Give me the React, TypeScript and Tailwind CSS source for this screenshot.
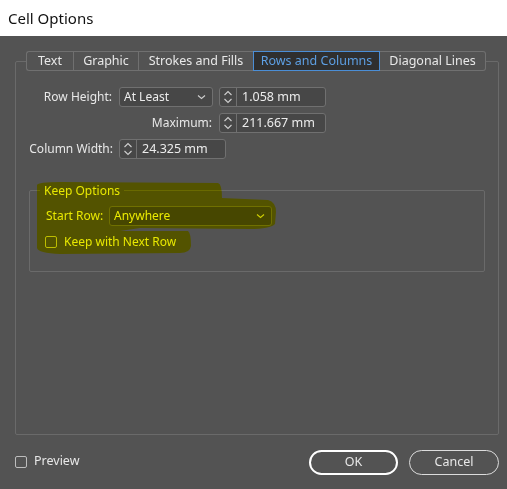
import React from "react";

const Chevron = ({ color = "#cfcfcf" }: { color?: string }) => (
  <svg width="9" height="6" viewBox="0 0 9 6" className="shrink-0">
    <path d="M1 1.5 L4.5 4.5 L8 1.5" fill="none" stroke={color} strokeWidth="1.1" />
  </svg>
);

const SpinIcon = () => (
  <svg width="10" height="16" viewBox="0 0 10 16">
    <path d="M1.5 6 L5 2.5 L8.5 6" fill="none" stroke="#cfcfcf" strokeWidth="1.1" />
    <path d="M1.5 10 L5 13.5 L8.5 10" fill="none" stroke="#cfcfcf" strokeWidth="1.1" />
  </svg>
);

const Spinner = ({ value }: { value: string }) => (
  <div className="flex h-[20px] w-[107px] rounded-[3px] border border-[#707070] bg-[#474747]">
    <div className="flex w-[17px] items-center justify-center border-r border-[#707070]">
      <SpinIcon />
    </div>
    <div className="flex items-center pl-[5px] text-[12.5px] text-[#ececec]">{value}</div>
  </div>
);

const Select = ({ value, width }: { value: string; width: string }) => (
  <div className={`flex h-[20px] ${width} items-center justify-between rounded-[3px] border border-[#707070] bg-[#474747] pl-[4px] pr-[6px] text-[12px] text-[#ececec]`}>
    <span>{value}</span>
    <Chevron />
  </div>
);

const Checkbox = () => (
  <div className="h-[12px] w-[12px] rounded-[2px] border border-[#bdbdbd]" />
);

export default function App() {
  const tabs = [
    { t: "Text", w: "w-[47px]" },
    { t: "Graphic", w: "w-[65px]" },
    { t: "Strokes and Fills", w: "w-[115px]" },
    { t: "Rows and Columns", w: "w-[127px]", active: true },
    { t: "Diagonal Lines", w: "w-[106px]" },
  ];
  return (
    <div
      className="relative flex h-[489px] w-[507px] flex-col overflow-hidden bg-[#535353] text-[#e8e8e8]"
      style={{ fontFamily: '"Noto Sans", "Open Sans", sans-serif' }}
    >
      <div className="h-[36px] shrink-0 bg-white pl-[8px] text-[15px] leading-[36px] text-[#111]">Cell Options</div>

      <div className="mx-[15px] mt-[25px] h-[374px] w-[484px] rounded-[2px] border border-[#6a6a6a]">
        <div className="-mt-[11px] ml-[10px] flex h-[20px] w-[460px] bg-[#535353] text-[12.5px]">
          {tabs.map((tb, i) =>
            tb.active ? (
              <div
                key={tb.t}
                className={`${tb.w} flex items-center justify-center border border-[#4b8ed6] bg-[#2f2f2f] text-[#5d9fe3]`}
              >
                {tb.t}
              </div>
            ) : (
              <div
                key={tb.t}
                className={`${tb.w} flex items-center justify-center border-y border-[#707070] ${i === 0 ? "rounded-l-[3px] border-l" : ""} ${i === 4 ? "rounded-r-[3px] border-r" : ""} ${i === 1 ? "border-l" : ""} ${i === 2 ? "border-l" : ""} text-[#e8e8e8]`}
              >
                {tb.t}
              </div>
            )
          )}
        </div>

        <div className="mt-[16px] flex flex-col gap-[6px] text-[12px]">
          <div className="flex h-[20px] items-center">
            <div className="w-[96px] text-right">Row Height:</div>
            <div className="ml-[7px]">
              <Select value="At Least" width="w-[94px]" />
            </div>
            <div className="ml-[6px]">
              <Spinner value="1.058 mm" />
            </div>
          </div>
          <div className="flex h-[20px] items-center">
            <div className="w-[196px] text-right">Maximum:</div>
            <div className="ml-[7px]">
              <Spinner value="211.667 mm" />
            </div>
          </div>
          <div className="flex h-[20px] items-center">
            <div className="w-[97px] text-right">Column Width:</div>
            <div className="ml-[6px]">
              <Spinner value="24.325 mm" />
            </div>
          </div>
        </div>

        <div className="ml-[13px] mt-[31px] h-[82px] w-[456px] rounded-[2px] border border-[#6a6a6a] text-[12px]">
          <div className="-mt-[9px] ml-[10px] w-fit bg-[#535353] px-[4px] leading-[18px]">Keep Options</div>
          <div className="ml-[16px] mt-[6px] flex h-[20px] items-center">
            <span className="w-[63px]">Start Row:</span>
            <div>
              <Select value="Anywhere" width="w-[163px]" />
            </div>
          </div>
          <div className="ml-[15px] mt-[7px] flex items-center gap-[7px]">
            <Checkbox />
            <span>Keep with Next Row</span>
          </div>
        </div>
      </div>

      <div className="mt-[15px] flex items-center justify-between pl-[15px] pr-[8px]">
        <div className="-mt-[2px] flex items-center gap-[7px] text-[12.5px]">
          <Checkbox />
          <span>Preview</span>
        </div>
        <div className="flex gap-[11px] text-[12.5px]">
          <div className="flex h-[25px] w-[89px] items-center justify-center rounded-full border-2 border-white">OK</div>
          <div className="flex h-[25px] w-[90px] items-center justify-center rounded-full border border-[#dcdcdc]">Cancel</div>
        </div>
      </div>

      <svg
        className="pointer-events-none absolute left-0 top-0 mix-blend-multiply"
        width="507"
        height="489"
        viewBox="0 0 507 489"
      >
        <path
          d="M37 185 Q38 182 60 182 L218 183 Q222 184 222 198 L268 200 Q276 202 276 212 L275 224 Q270 229 250 229 L140 228 L120 231 L188 231 Q191 233 191 246 Q190 253 180 253 L60 254 Q38 253 37 248 Z"
          fill="#ffff00"
        />
      </svg>
    </div>
  );
}
